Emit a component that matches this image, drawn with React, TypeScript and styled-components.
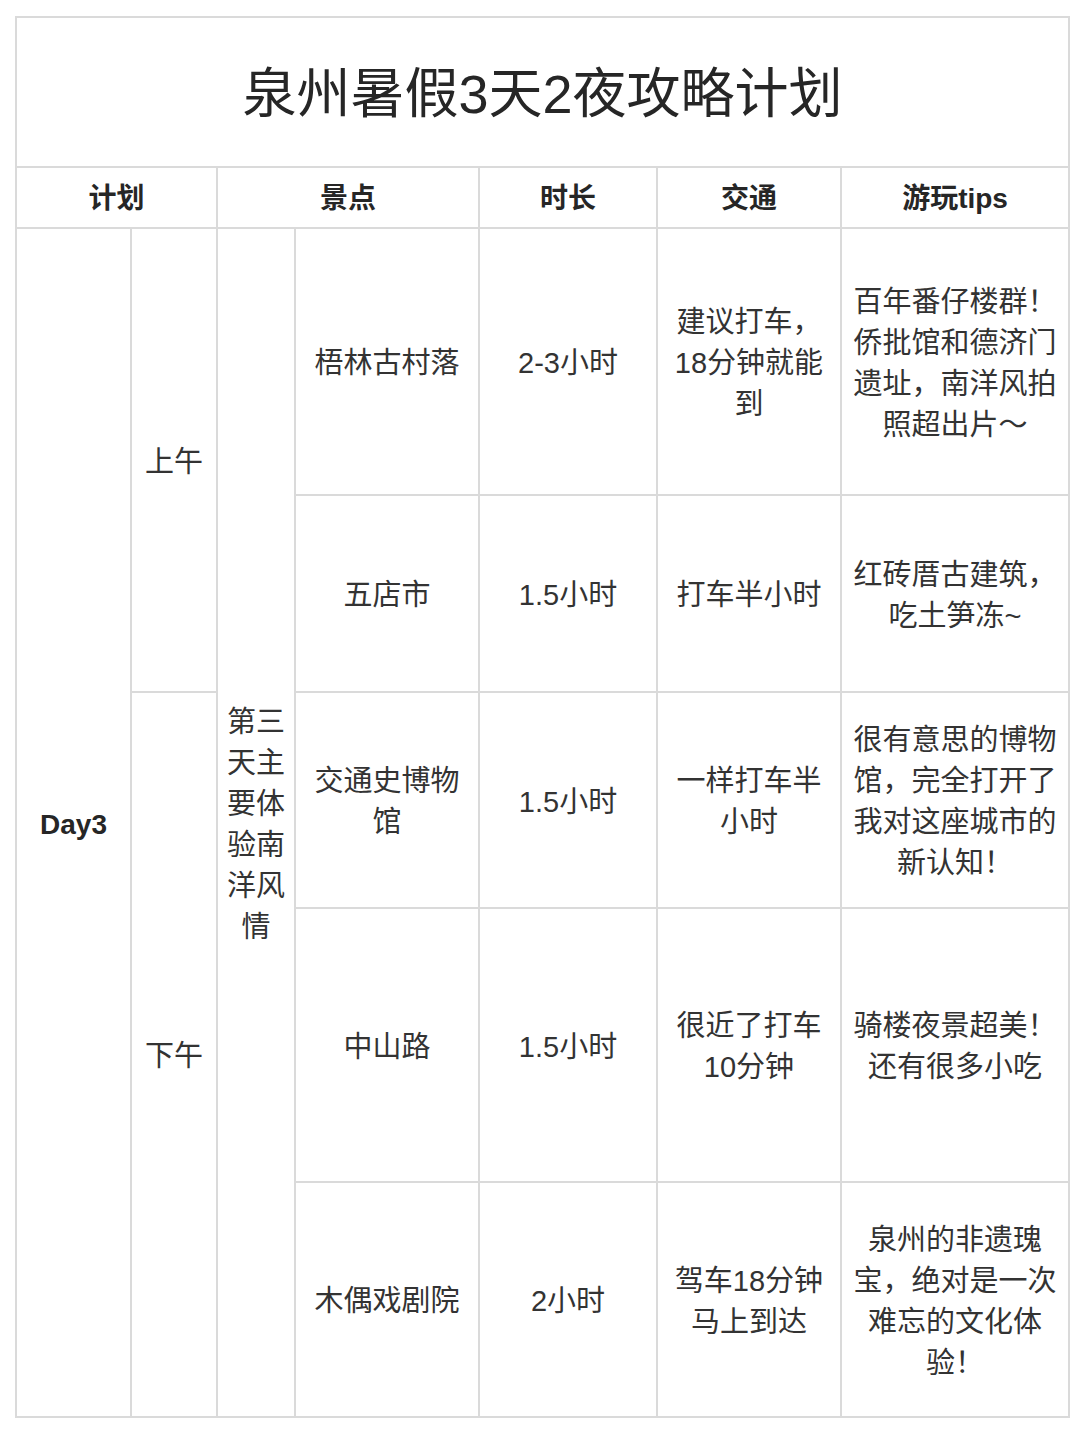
import React from "react";
import styled, { createGlobalStyle } from "styled-components";

const Global = createGlobalStyle`
  html, body {
    margin: 0;
    padding: 0;
    background: #fff;
  }
  body {
    font-family: "Liberation Sans", "Noto Sans CJK SC", sans-serif;
    color: #333;
  }
`;

type Spot = {
  name: React.ReactNode;
  time: string;
  traffic: React.ReactNode;
  tips: React.ReactNode;
  h: number;
};

const spots: Spot[] = [
  {
    name: "梧林古村落",
    time: "2-3小时",
    traffic: (
      <>
        建议打车，<br />18分钟就能<br />到
      </>
    ),
    tips: (
      <>
        百年番仔楼群！<br />侨批馆和德济门<br />遗址，南洋风拍<br />照超出片～
      </>
    ),
    h: 267,
  },
  {
    name: "五店市",
    time: "1.5小时",
    traffic: "打车半小时",
    tips: (
      <>
        红砖厝古建筑，<br />吃土笋冻~
      </>
    ),
    h: 197,
  },
  {
    name: (
      <>
        交通史博物<br />馆
      </>
    ),
    time: "1.5小时",
    traffic: (
      <>
        一样打车半<br />小时
      </>
    ),
    tips: (
      <>
        很有意思的博物<br />馆，完全打开了<br />我对这座城市的<br />新认知！
      </>
    ),
    h: 216,
  },
  {
    name: "中山路",
    time: "1.5小时",
    traffic: (
      <>
        很近了打车<br />10分钟
      </>
    ),
    tips: (
      <>
        骑楼夜景超美！<br />还有很多小吃
      </>
    ),
    h: 274,
  },
  {
    name: "木偶戏剧院",
    time: "2小时",
    traffic: (
      <>
        驾车18分钟<br />马上到达
      </>
    ),
    tips: (
      <>
        泉州的非遗瑰<br />宝，绝对是一次<br />难忘的文化体<br />验！
      </>
    ),
    h: 235,
  },
];

const App = () => {
  return (
    <Page>
      <Global />
      <Table>
        <colgroup>
          <col style={{ width: 115 }} />
          <col style={{ width: 86 }} />
          <col style={{ width: 78 }} />
          <col style={{ width: 184 }} />
          <col style={{ width: 178 }} />
          <col style={{ width: 184 }} />
          <col style={{ width: 228 }} />
        </colgroup>
        <tbody>
          <tr>
            <Title colSpan={7}>泉州暑假3天2夜攻略计划</Title>
          </tr>
          <tr>
            <Head colSpan={2}>计划</Head>
            <Head colSpan={2}>景点</Head>
            <Head>时长</Head>
            <Head>交通</Head>
            <Head>游玩tips</Head>
          </tr>
          {spots.map((s, i) => (
            <tr key={i} style={{ height: s.h }}>
              {i === 0 && (
                <>
                  <DayCell rowSpan={5}>Day3</DayCell>
                  <Cell rowSpan={2}>上午</Cell>
                  <Cell rowSpan={5}>
                    第三<br />天主<br />要体<br />验南<br />洋风<br />情
                  </Cell>
                </>
              )}
              {i === 2 && <Cell rowSpan={3}>下午</Cell>}
              <Cell>{s.name}</Cell>
              <Cell>{s.time}</Cell>
              <Cell>{s.traffic}</Cell>
              <Cell>{s.tips}</Cell>
            </tr>
          ))}
        </tbody>
      </Table>
    </Page>
  );
};

export default App;

const Page = styled.div`
  width: 1080px;
  height: 1440px;
  padding: 16px 0 0 15px;
  box-sizing: border-box;
`;

const Table = styled.table`
  width: 1055px;
  table-layout: fixed;
  border-collapse: collapse;
  border: 2px solid #dadada;

  td {
    border: 2px solid #dadada;
    padding: 0;
    text-align: center;
    vertical-align: middle;
  }
`;

const Title = styled.td`
  height: 142px;
  font-size: 54px;
  color: #262626;
  && {
    padding-bottom: 6px;
  }
`;

const Head = styled.td`
  height: 55px;
  font-size: 28px;
  font-weight: 700;
  color: #262626;
  && {
    padding-bottom: 4px;
  }
`;

const Cell = styled.td`
  font-size: 29px;
  line-height: 41px;
  color: #333;
  && {
    padding-top: 4px;
  }
`;

const DayCell = styled(Cell)`
  font-weight: 700;
  font-size: 28px;
  color: #262626;
`;
